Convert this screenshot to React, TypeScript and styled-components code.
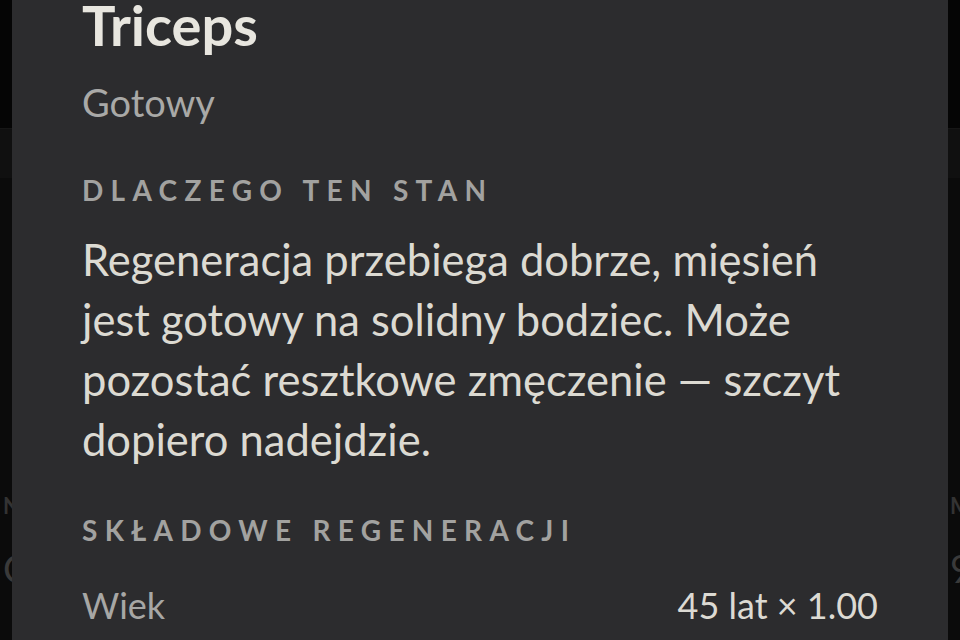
import React from "react";
import styled, { createGlobalStyle } from "styled-components";

const GlobalStyle = createGlobalStyle`
    html, body {
        margin: 0;
        padding: 0;
        background: #070707;
        font-family: Lato, "Noto Sans", sans-serif;
        overflow: hidden;
    }
`;

const Page = styled.div`
    width: 960px;
    height: 640px;
    display: flex;
    flex-direction: column;
    background: #0b0b0b;
    overflow: hidden;
`;

const TopBar = styled.div`
    height: 128px;
    flex-shrink: 0;
    background: #050505;
    border-bottom: 1px solid #161616;
`;

const TabStrip = styled.div`
    height: 49px;
    flex-shrink: 0;
    background: #101010;
`;

const Carousel = styled.div`
    display: flex;
    padding: 314px 0 0 3px;
    overflow: hidden;
`;

const Slide = styled.div`
    flex: 0 0 947px;
    display: flex;
    flex-direction: column;
    gap: 26px;
`;

const SlideLabel = styled.div`
    font-size: 22px;
    font-weight: 700;
    letter-spacing: 0.2em;
    color: #333333;
`;

const SlideValue = styled.div`
    font-size: 38px;
    color: #3a3a3a;
`;

const Sheet = styled.div`
    position: fixed;
    top: 0;
    bottom: 0;
    left: 12px;
    right: 12px;
    background: #2c2c2e;
    padding: 0 70px;
    display: flex;
    flex-direction: column;
    overflow: hidden;
`;

const Title = styled.h1`
    margin: -9px 0 0;
    font-size: 56px;
    line-height: 1.2;
    font-weight: 700;
    color: #e8e6df;
`;

const Status = styled.div`
    margin-top: 22px;
    font-size: 38px;
    line-height: 1.2;
    color: #a9a9a7;
`;

const SectionHeading = styled.h2<{ gap: number }>`
    margin: ${({ gap }) => gap}px 0 0;
    font-size: 28px;
    line-height: 1.2;
    font-weight: 700;
    letter-spacing: 7.3px;
    text-transform: uppercase;
    color: #a2a2a0;
`;

const Body = styled.p`
    margin: 22px 0 0;
    font-size: 43.5px;
    line-height: 60px;
    color: #dcdad2;
`;

const FactorRow = styled.div`
    margin-top: 36px;
    display: flex;
    justify-content: space-between;
    align-items: baseline;
    font-size: 36px;
    line-height: 1.2;
`;

const FactorName = styled.span`
    color: #a7a7a5;
`;

const FactorValue = styled.span`
    color: #dcdad3;
`;

export default function App() {
    return (
        <>
            <GlobalStyle />
            <Page>
                <TopBar />
                <TabStrip />
                <Carousel>
                    <Slide>
                        <SlideLabel>NOGI</SlideLabel>
                        <SlideValue>Czworogłowe</SlideValue>
                    </Slide>
                    <Slide>
                        <SlideLabel>MOBILNOŚĆ</SlideLabel>
                        <SlideValue>9/10</SlideValue>
                    </Slide>
                </Carousel>
            </Page>
            <Sheet>
                <Title>Triceps</Title>
                <Status>Gotowy</Status>
                <SectionHeading gap={48}>Dlaczego ten stan</SectionHeading>
                <Body>
                    Regeneracja przebiega dobrze, mięsień jest gotowy na solidny bodziec. Może
                    pozostać resztkowe zmęczenie — szczyt dopiero nadejdzie.
                </Body>
                <SectionHeading gap={45}>Składowe regeneracji</SectionHeading>
                <FactorRow>
                    <FactorName>Wiek</FactorName>
                    <FactorValue>45 lat × 1.00</FactorValue>
                </FactorRow>
            </Sheet>
        </>
    );
}
